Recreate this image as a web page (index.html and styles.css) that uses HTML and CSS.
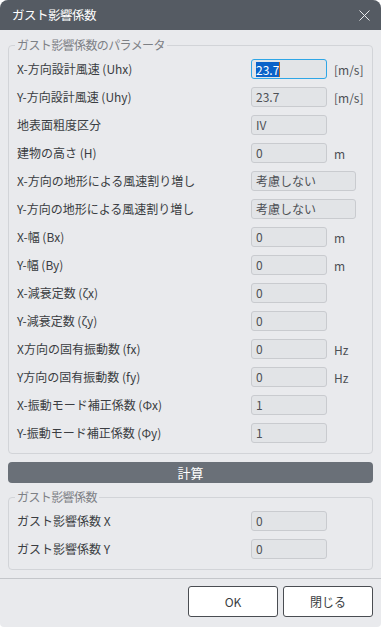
FILE: index.html
```html
<!DOCTYPE html>
<html lang="ja">
<head>
<meta charset="utf-8">
<title>ガスト影響係数</title>
<link rel="stylesheet" href="styles.css">
</head>
<body>
<div class="window">
  <div class="titlebar">
    <span class="title">ガスト影響係数</span>
    <svg class="close" width="11" height="11" viewBox="0 0 11 11"><path d="M0.5 0.5 L10.5 10.5 M10.5 0.5 L0.5 10.5" stroke="#e8eaec" stroke-width="1" fill="none"/></svg>
  </div>
  <div class="content">
    <fieldset class="group">
      <legend>ガスト影響係数のパラメータ</legend>
      <div class="row"><span class="label">X-方向設計風速 (Uhx)</span><div class="field focus"><span class="sel">23.7</span><span class="caret"></span></div><span class="unit">[m/s]</span></div>
      <div class="row"><span class="label">Y-方向設計風速 (Uhy)</span><div class="field">23.7</div><span class="unit">[m/s]</span></div>
      <div class="row"><span class="label">地表面粗度区分</span><div class="field">IV</div></div>
      <div class="row"><span class="label">建物の高さ (H)</span><div class="field">0</div><span class="unit">m</span></div>
      <div class="row"><span class="label">X-方向の地形による風速割り増し</span><div class="field wide">考慮しない</div></div>
      <div class="row"><span class="label">Y-方向の地形による風速割り増し</span><div class="field wide">考慮しない</div></div>
      <div class="row"><span class="label">X-幅 (Bx)</span><div class="field">0</div><span class="unit">m</span></div>
      <div class="row"><span class="label">Y-幅 (By)</span><div class="field">0</div><span class="unit">m</span></div>
      <div class="row"><span class="label">X-減衰定数 (ζx)</span><div class="field">0</div></div>
      <div class="row"><span class="label">Y-減衰定数 (ζy)</span><div class="field">0</div></div>
      <div class="row"><span class="label">X方向の固有振動数 (fx)</span><div class="field">0</div><span class="unit">Hz</span></div>
      <div class="row"><span class="label">Y方向の固有振動数 (fy)</span><div class="field">0</div><span class="unit">Hz</span></div>
      <div class="row"><span class="label">X-振動モード補正係数 (Φx)</span><div class="field">1</div></div>
      <div class="row"><span class="label">Y-振動モード補正係数 (Φy)</span><div class="field">1</div></div>
    </fieldset>
    <button class="calc">計算</button>
    <fieldset class="group result">
      <legend>ガスト影響係数</legend>
      <div class="row"><span class="label">ガスト影響係数 X</span><div class="field">0</div></div>
      <div class="row"><span class="label">ガスト影響係数 Y</span><div class="field">0</div></div>
    </fieldset>
  </div>
  <div class="footer">
    <button class="btn">OK</button>
    <button class="btn">閉じる</button>
  </div>
</div>
</body>
</html>
```

FILE: styles.css
```css
html, body {
  margin: 0;
  padding: 0;
  background: #ffffff;
}
body {
  font-family: "Noto Sans CJK JP", "Noto Sans", sans-serif;
  font-size: 12px;
  color: #3a3d42;
}
.window {
  width: 381px;
  height: 627px;
  background: #e9eaed;
  border-radius: 8px 8px 4px 4px;
  overflow: hidden;
  display: flex;
  flex-direction: column;
}
.titlebar {
  height: 30px;
  flex: none;
  background: #555b63;
  display: flex;
  align-items: center;
  justify-content: space-between;
  padding: 0 11px 0 12px;
}
.title {
  color: #ffffff;
  font-size: 12.5px;
  letter-spacing: -0.5px;
  line-height: 16px;
}
.close {
  display: block;
}
.content {
  padding: 7px 8px 0 8px;
  display: flex;
  flex-direction: column;
}
.group {
  margin: 0;
  border: 1px solid #d2d4d8;
  border-radius: 4px;
  padding: 6px 8px 10px 8px;
  display: flex;
  flex-direction: column;
  gap: 8px;
  min-width: 0;
}
.group legend {
  padding: 0 2px;
  margin-left: -2px;
  color: #7d8085;
  font-size: 12px;
  line-height: 16px;
  letter-spacing: -0.6px;
}
.row {
  display: flex;
  align-items: center;
  height: 20px;
}
.label {
  width: 234px;
  flex: none;
  line-height: 16px;
  white-space: nowrap;
}
.field {
  box-sizing: border-box;
  width: 76px;
  height: 20px;
  border: 1px solid #c9cbcf;
  border-radius: 3px;
  background: #e2e4e7;
  color: #4d5055;
  padding-left: 4px;
  display: flex;
  align-items: center;
  line-height: 16px;
}
.field.wide {
  width: 105px;
}
.field.focus {
  border-color: #2fa6e6;
}
.sel {
  background: #0a62c9;
  color: #ffffff;
  line-height: 15px;
}
.caret {
  width: 1px;
  height: 15px;
  background: #c06a20;
}
.unit {
  margin-left: 7px;
  color: #4d5055;
}
.calc {
  margin: 8px 0 0 0;
  height: 21px;
  border: none;
  border-radius: 4px;
  background: #6a7078;
  color: #ffffff;
  font-family: "Noto Sans CJK JP", "Noto Sans", sans-serif;
  font-size: 13px;
  padding: 0;
}
.result {
  margin-top: 6px;
}
.footer {
  margin-top: 8px;
  border-top: 1px solid #c4c6ca;
  padding: 7px 8px 0 8px;
  display: flex;
  justify-content: flex-end;
  gap: 5px;
}
.btn {
  width: 90px;
  height: 31px;
  background: #ffffff;
  border: 1px solid #4a4d52;
  border-radius: 3px;
  color: #3a3d42;
  font-family: "Noto Sans CJK JP", "Noto Sans", sans-serif;
  font-size: 12px;
  padding: 0;
}
```
